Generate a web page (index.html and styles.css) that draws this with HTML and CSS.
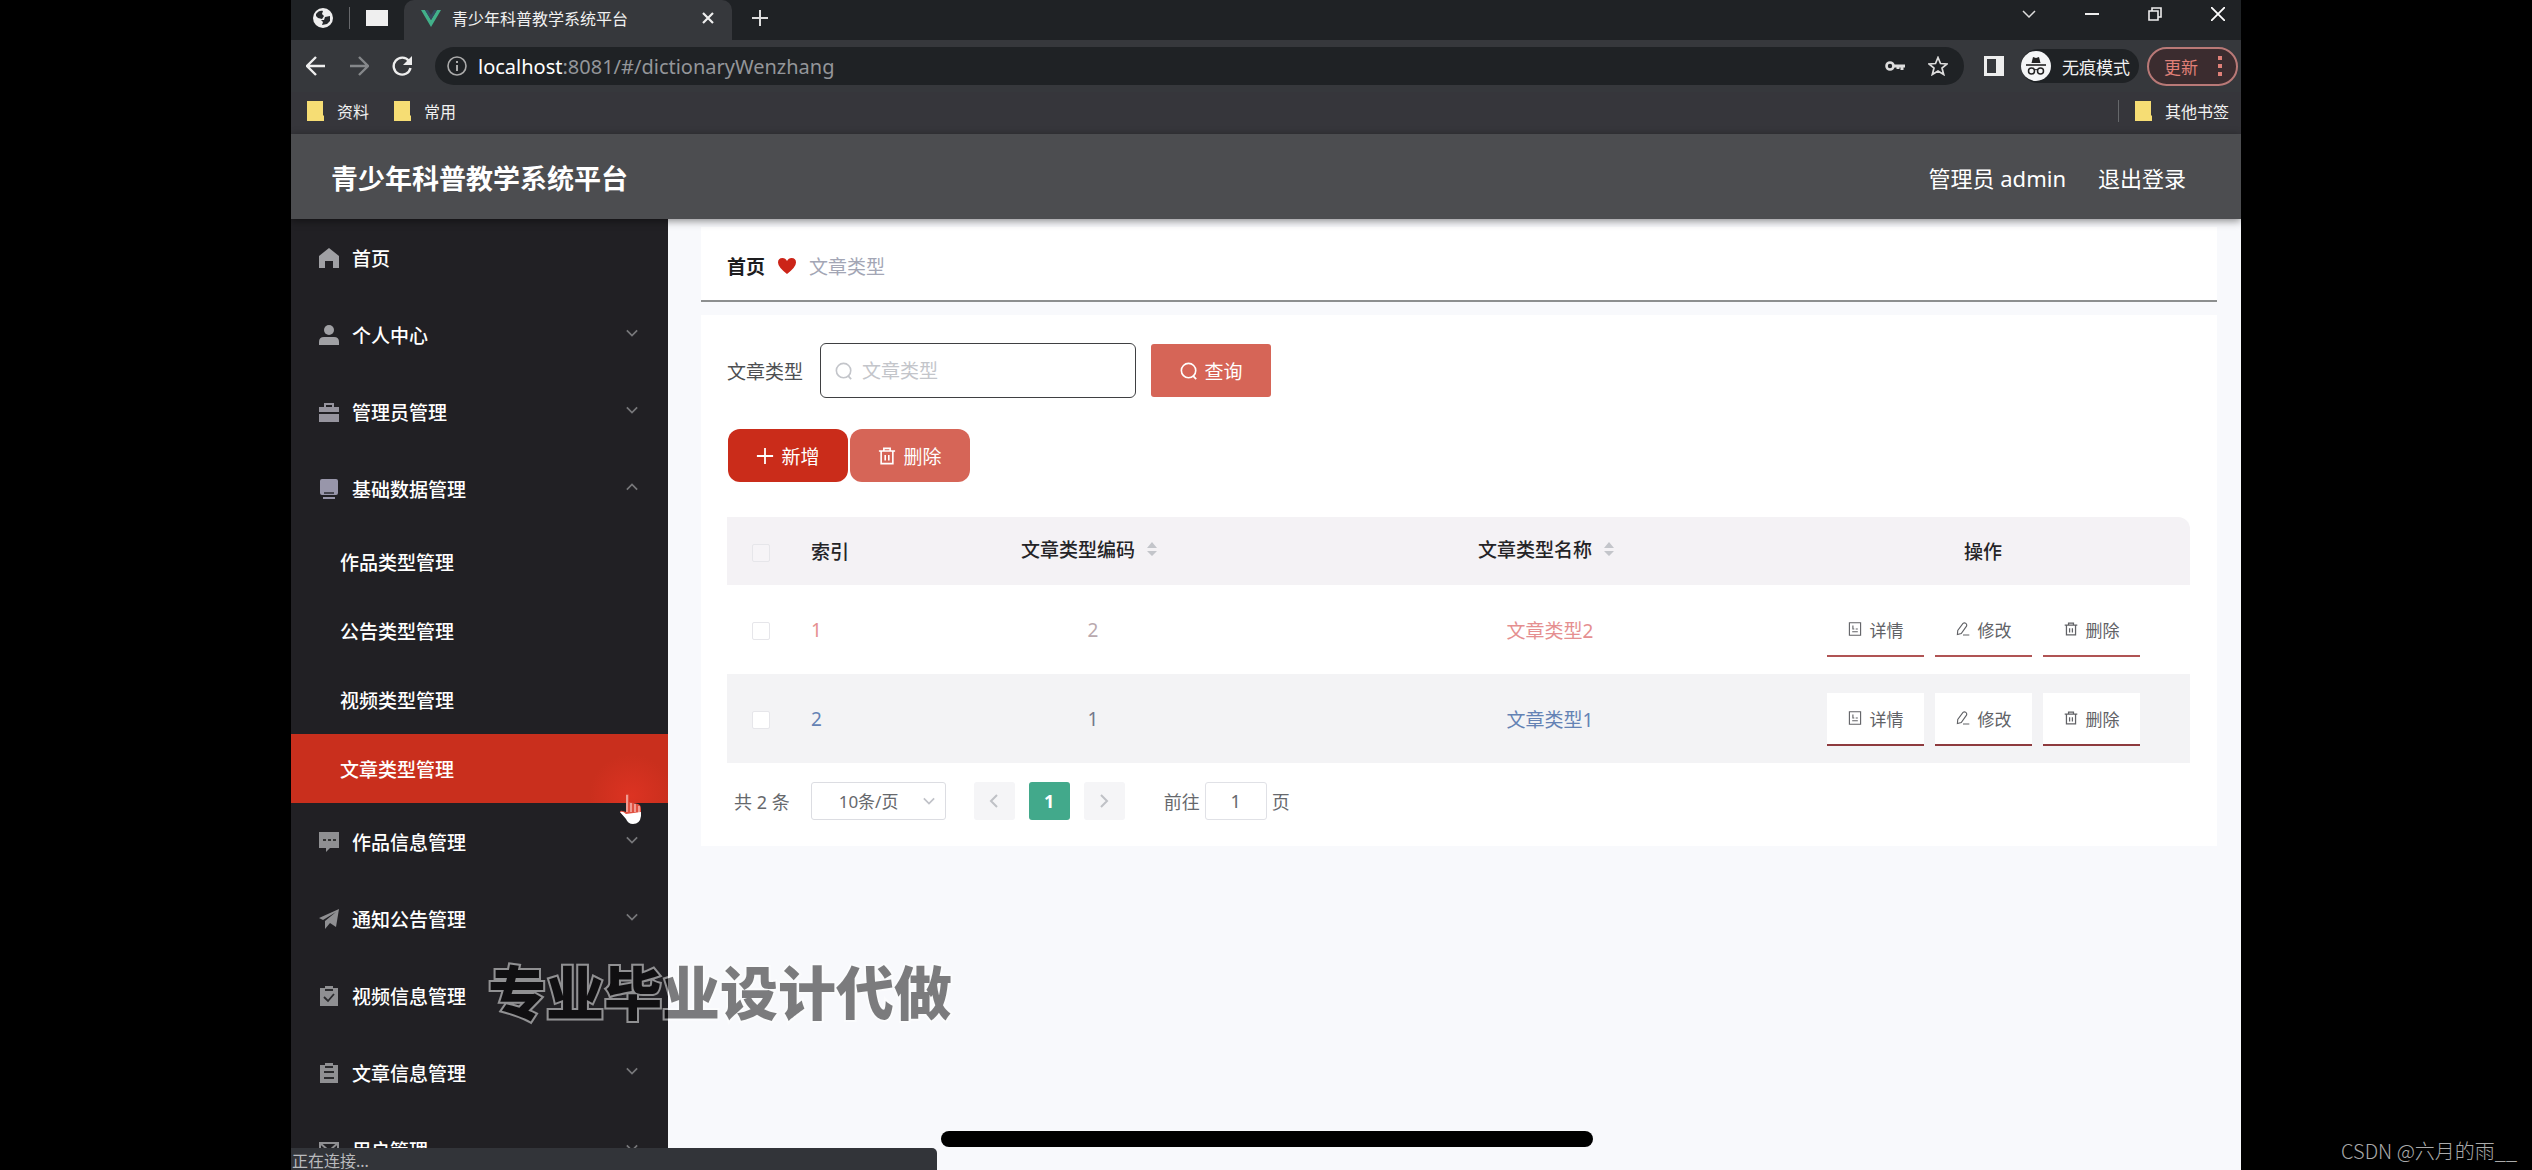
FILE: index.html
```html
<!DOCTYPE html>
<html lang="zh-CN">
<head>
<meta charset="utf-8">
<title>青少年科普教学系统平台</title>
<link rel="stylesheet" href="styles.css">
</head>
<body>
<svg class="sprite" aria-hidden="true">
  <symbol id="down" viewBox="0 0 14 14"><path d="M1 4l6 6 6-6" fill="none" stroke="currentColor" stroke-width="2"/></symbol>
  <symbol id="up" viewBox="0 0 14 14"><path d="M1 10l6-6 6 6" fill="none" stroke="currentColor" stroke-width="2"/></symbol>
  <symbol id="left" viewBox="0 0 14 14"><path d="M10 1L4 7l6 6" fill="none" stroke="currentColor" stroke-width="2"/></symbol>
  <symbol id="right" viewBox="0 0 14 14"><path d="M4 1l6 6-6 6" fill="none" stroke="currentColor" stroke-width="2"/></symbol>
  <symbol id="search" viewBox="0 0 20 20"><circle cx="9.500" cy="9.500" r="8" fill="none" stroke="currentColor" stroke-width="1.800"/><path d="M14.500 15.500l3.500 3.500" stroke="currentColor" stroke-width="2"/></symbol>
  <symbol id="trash" viewBox="0 0 20 20"><path d="M1 4.500h18M6.500 4V1.500h7V4M3.500 5v13.500h13V5M8 9v6M12 9v6" fill="none" stroke="currentColor" stroke-width="1.800"/></symbol>
  <symbol id="plus" viewBox="0 0 20 20"><path d="M10 1v18M1 10h18" stroke="currentColor" stroke-width="2"/></symbol>
  <symbol id="doc" viewBox="0 0 20 20"><path d="M2 1h16v18H2zM7 5v5h2M6 14h8M11 10h3" fill="none" stroke="currentColor" stroke-width="1.600"/></symbol>
  <symbol id="edit" viewBox="0 0 20 20"><path d="M10 2q2-1.500 4 0t1 4L7.500 16.500 2 18l.500-6zM10 18.500h9" fill="none" stroke="currentColor" stroke-width="1.600"/></symbol>
  <symbol id="folder" viewBox="0 0 17 20"><path d="M0 0h16v14l1 1v5H0z" fill="#f6dd74"/></symbol>
  <symbol id="sort" viewBox="0 0 12 18"><path d="M6 2l5 6H1zM6 16l5-5H1z" fill="#c3c5ca"/></symbol>
</svg>

<div class="stage">
  <div class="tabs">
    <div class="pinned">
      <svg class="ico20" viewBox="0 0 20 20"><circle cx="10" cy="10" r="10" fill="#eee"/><path d="M3 6c2-3 5-4 7-3l-1 3 2 2-2 3-4-1-2-2zM12 9l5-1v5l-3 3-5 1 1-3-2-2 3 0z" fill="#26292c"/></svg>
      <span class="bar-sep"></span>
      <span class="pinned-page"></span>
    </div>
    <div class="tab">
      <svg class="vue" viewBox="0 0 20 17"><path d="M0 0h4l6 10 6-10h4L10 17z" fill="#42b08a"/><path d="M4 0h3l3 5 3-5h3l-6 10z" fill="#35495e"/></svg>
      <span class="tab-title">青少年科普教学系统平台</span>
      <button class="plain" aria-label="关闭标签页"><svg class="ico12" viewBox="0 0 12 12"><path d="M1 1l10 10M11 1L1 11" stroke="#eee" stroke-width="2.200"/></svg></button>
    </div>
    <button class="plain new-tab" aria-label="新标签页"><svg class="ico16" viewBox="0 0 16 16"><path d="M8 0v16M0 8h16" stroke="#ddd" stroke-width="2"/></svg></button>
    <div class="window-buttons">
      <button class="plain" aria-label="标签页列表"><svg class="ico14" viewBox="0 0 14 14"><path d="M1 4l6 6 6-6" fill="none" stroke="#ddd" stroke-width="1.500"/></svg></button>
      <button class="plain" aria-label="最小化"><svg class="ico14" viewBox="0 0 14 14"><path d="M0 7h14" stroke="#eee" stroke-width="2"/></svg></button>
      <button class="plain" aria-label="还原"><svg class="ico14" viewBox="0 0 14 14"><path d="M1 4h9v9H1zM4 4V1h9v9h-3" fill="none" stroke="#eee" stroke-width="1.600"/></svg></button>
      <button class="plain" aria-label="关闭"><svg class="ico14" viewBox="0 0 14 14"><path d="M0 0l14 14M14 0L0 14" stroke="#fff" stroke-width="1.800"/></svg></button>
    </div>
  </div>

  <div class="toolbar">
    <button class="plain" aria-label="后退"><svg class="ico20" viewBox="0 0 20 20"><path d="M19 10H2M10 1l-9 9 9 9" fill="none" stroke="#eee" stroke-width="2.400"/></svg></button>
    <button class="plain" aria-label="前进"><svg class="ico20" viewBox="0 0 20 20"><path d="M1 10h17M10 1l9 9-9 9" fill="none" stroke="#85878a" stroke-width="2.400"/></svg></button>
    <button class="plain" aria-label="刷新"><svg class="ico20" viewBox="0 0 20 20"><path d="M17 5a8.500 8.500 0 1 0 1.500 7" fill="none" stroke="#eee" stroke-width="2.400"/><path d="M20 0v9h-9z" fill="#eee"/></svg></button>
    <div class="address">
      <svg class="ico20" viewBox="0 0 20 20"><circle cx="10" cy="10" r="9" fill="none" stroke="#aaa" stroke-width="1.600"/><path d="M10 9v6M10 5v2" stroke="#aaa" stroke-width="2"/></svg>
      <span class="url"><b>localhost</b>:8081/#/dictionaryWenzhang</span>
      <svg class="ico20" viewBox="0 0 20 20"><circle cx="5" cy="10" r="3.500" fill="none" stroke="#ddd" stroke-width="2.600"/><path d="M8 10h12M17 10v4M13 10v3" stroke="#ddd" stroke-width="3"/></svg>
      <svg class="ico20" viewBox="0 0 20 20"><path d="M10 1.500l2.500 6 6.500.5-5 4 1.700 6.500L10 15l-5.700 3.500L6 12 1 8l6.500-.5z" fill="none" stroke="#ddd" stroke-width="1.700"/></svg>
    </div>
    <svg class="ico20" viewBox="0 0 20 20"><path d="M1.500 1.500h17v17h-17z" fill="none" stroke="#eee" stroke-width="3"/><path d="M12 1h7v18h-7z" fill="#eee"/></svg>
    <div class="incognito">
      <svg class="ico30" viewBox="0 0 30 30"><circle cx="15" cy="15" r="15" fill="#f4f5f6"/><path d="M10.500 12l1.500-6 3 1 3-1 1.500 6z" fill="#222"/><path d="M5 14h20" stroke="#222" stroke-width="1.600"/><circle cx="10.500" cy="20" r="3" fill="none" stroke="#222" stroke-width="1.500"/><circle cx="19.500" cy="20" r="3" fill="none" stroke="#222" stroke-width="1.500"/><path d="M13 19q2-1 4 0" fill="none" stroke="#222"/></svg>
      <span>无痕模式</span>
    </div>
    <button class="update">更新<svg class="dots" viewBox="0 0 4 20"><path d="M0 0h4v4H0zM0 8h4v4H0zM0 16h4v4H0z" fill="#e08078"/></svg></button>
  </div>

  <div class="bookmarks">
    <a href="#"><svg class="folder"><use href="#folder"/></svg>资料</a>
    <a href="#"><svg class="folder"><use href="#folder"/></svg>常用</a>
    <span class="bar-sep push"></span>
    <a href="#"><svg class="folder"><use href="#folder"/></svg>其他书签</a>
  </div>

  <header class="app-header">
    <h1>青少年科普教学系统平台</h1>
    <span>管理员 admin</span>
    <a href="#">退出登录</a>
  </header>

  <div class="body">
    <nav class="side">
      <a class="item" href="#"><svg class="ico20" viewBox="0 0 20 20"><path d="M10 0l10 8v12h-6v-7H6v7H0V8z" fill="#a0a0a4"/></svg><span>首页</span></a>
      <a class="item" href="#"><svg class="ico20" viewBox="0 0 20 20"><circle cx="10" cy="5" r="5" fill="#a0a0a4"/><path d="M0 20v-3q0-5 5-5h10q5 0 5 5v3z" fill="#a0a0a4"/></svg><span>个人中心</span><svg class="chev"><use href="#down"/></svg></a>
      <a class="item" href="#"><svg class="ico20" viewBox="0 0 20 20"><path d="M0 10V5h5V1h10v4h5v5zM7 5h6V3H7zM0 12h20v8H0z" fill="#96949e" fill-rule="evenodd"/></svg><span>管理员管理</span><svg class="chev"><use href="#down"/></svg></a>
      <a class="item" href="#"><svg class="ico20" viewBox="0 0 20 20"><path d="M1 2q0-2 2-2h14q2 0 2 2v12q0 2-2 2H3q-2 0-2-2zM4 18h12v2H4z" fill="#9896aa"/><path d="M5 14h10" stroke="#2a2a30" stroke-width="1.500"/></svg><span>基础数据管理</span><svg class="chev"><use href="#up"/></svg></a>
      <a class="sub" href="#">作品类型管理</a>
      <a class="sub" href="#">公告类型管理</a>
      <a class="sub" href="#">视频类型管理</a>
      <a class="sub active" href="#">文章类型管理
        <svg class="hand" viewBox="0 0 22 32"><path d="M6 1q2-1 3 1v7l9 2q3 1 3 5v6H3l-3-3q0-2 3-1l3 1z" fill="#e0503f"/><path d="M7 2v17M11 10v9M15 11v8M19 13v7" stroke="#f3b0a8" stroke-width="1.600"/><path d="M0 19q3-1 6 2l15-2v4q-1 8-8 8-5 0-7-5z" fill="#fff"/></svg>
      </a>
      <a class="item" href="#"><svg class="ico20" viewBox="0 0 20 20"><path d="M0 0h20v16h-9l-4 4v-4H0z" fill="#8f8f92"/><path d="M4 8h3M9 8h3M14 8h3" stroke="#333" stroke-width="2"/></svg><span>作品信息管理</span><svg class="chev"><use href="#down"/></svg></a>
      <a class="item" href="#"><svg class="ico20" viewBox="0 0 20 20"><path d="M20 0l-3 18-6-4-5 6v-8L17 3 4 11l-4-2z" fill="#8f8f92"/></svg><span>通知公告管理</span><svg class="chev"><use href="#down"/></svg></a>
      <a class="item" href="#"><svg class="ico20" viewBox="0 0 20 20"><path d="M1 2h5V0h8v2h5v18H1z" fill="#8f8f92"/><path d="M6 4h8M5 11l4 4 6-7" fill="none" stroke="#2a2a2d" stroke-width="1.800"/></svg><span>视频信息管理</span></a>
      <a class="item" href="#"><svg class="ico20" viewBox="0 0 20 20"><path d="M1 2h5V0h8v2h5v18H1z" fill="#8f8f92"/><path d="M6 4h8M5 9h10M5 15h10" fill="none" stroke="#2a2a2d" stroke-width="1.800"/></svg><span>文章信息管理</span><svg class="chev"><use href="#down"/></svg></a>
      <a class="item" href="#"><svg class="ico20" viewBox="0 0 20 20"><path d="M1 3h18v14H1zM1 3l9 8 9-8" fill="none" stroke="#8f8f92" stroke-width="2"/></svg><span>用户管理</span><svg class="chev"><use href="#down"/></svg></a>
    </nav>

    <main class="main">
      <div class="crumb">
        <a href="#">首页</a>
        <svg class="heart" viewBox="0 0 18 16"><path d="M9 16Q0 9 0 4.500 0 0 4.500 0 7.500 0 9 3q1.500-3 4.500-3Q18 0 18 4.500 18 9 9 16z" fill="#cc2418"/></svg>
        <span>文章类型</span>
      </div>

      <section class="card">
        <form class="filter">
          <label for="type">文章类型</label>
          <div class="field">
            <svg class="ico18"><use href="#search"/></svg>
            <input id="type" type="text" placeholder="文章类型">
          </div>
          <button class="btn soft query" type="button"><svg class="ico18"><use href="#search"/></svg>查询</button>
        </form>
        <div class="actions">
          <button class="btn"><svg class="ico18"><use href="#plus"/></svg>新增</button>
          <button class="btn soft"><svg class="ico18"><use href="#trash"/></svg>删除</button>
        </div>

        <table>
          <colgroup><col class="c-check"><col class="c-index"><col><col><col class="c-ops"></colgroup>
          <thead>
            <tr>
              <th><input type="checkbox" aria-label="全选"></th>
              <th class="index">索引</th>
              <th class="sorted"><span class="sortable">文章类型编码<svg class="sort"><use href="#sort"/></svg></span></th>
              <th class="sorted"><span class="sortable">文章类型名称<svg class="sort"><use href="#sort"/></svg></span></th>
              <th>操作</th>
            </tr>
          </thead>
          <tbody>
            <tr class="pink">
              <td><input type="checkbox" aria-label="选择第1行"></td>
              <td class="index">1</td>
              <td class="value code">2</td>
              <td class="value">文章类型2</td>
              <td><div class="ops"><button><svg class="ico14"><use href="#doc"/></svg>详情</button><button><svg class="ico14"><use href="#edit"/></svg>修改</button><button><svg class="ico14"><use href="#trash"/></svg>删除</button></div></td>
            </tr>
            <tr class="blue">
              <td><input type="checkbox" aria-label="选择第2行"></td>
              <td class="index">2</td>
              <td class="value code">1</td>
              <td class="value">文章类型1</td>
              <td><div class="ops"><button><svg class="ico14"><use href="#doc"/></svg>详情</button><button><svg class="ico14"><use href="#edit"/></svg>修改</button><button><svg class="ico14"><use href="#trash"/></svg>删除</button></div></td>
            </tr>
          </tbody>
        </table>

        <div class="pager">
          <span>共 2 条</span>
          <div class="size"><select aria-label="每页条数"><option>10条/页</option></select><svg class="ico12"><use href="#down"/></svg></div>
          <button class="page" aria-label="上一页"><svg class="ico14"><use href="#left"/></svg></button>
          <button class="page current">1</button>
          <button class="page" aria-label="下一页"><svg class="ico14"><use href="#right"/></svg></button>
          <label class="jump">前往<input type="text" value="1">页</label>
        </div>
      </section>
    </main>
  </div>

  <div class="status">正在连接...</div>
  <div class="caption">专业毕业设计代做</div>
</div>
<div class="home-bar"></div>
<div class="credit">CSDN @六月的雨__</div>
</body>
</html>
```

FILE: styles.css
```css
* { box-sizing: border-box; }
body {
  margin: 0;
  background: #000;
  font-family: "Noto Sans", "Noto Sans CJK SC", sans-serif;
  overflow: hidden;
}
a { color: inherit; text-decoration: none; }
button, input, select { font: inherit; color: inherit; margin: 0; }
svg { flex: none; display: block; }
.sprite { position: absolute; width: 0; height: 0; }
.plain { background: none; border: 0; padding: 0; display: flex; }
.ico12 { width: 12px; height: 12px; }
.ico14 { width: 14px; height: 14px; }
.ico16 { width: 16px; height: 16px; }
.ico18 { width: 18px; height: 18px; }
.ico20 { width: 20px; height: 20px; }
.ico30 { width: 30px; height: 30px; }

.stage {
  position: relative;
  height: 100vh;
  margin: 0 291px;
  display: flex;
  flex-direction: column;
  overflow: hidden;
  background: #f8f9fc;
}

/* browser window */
.tabs { flex: none; height: 40px; display: flex; background: #1f2225; color: #f1f1f1; }
.pinned { width: 113px; display: flex; align-items: center; gap: 16px; padding-left: 22px; padding-bottom: 4px; }
.bar-sep { width: 1px; height: 22px; background: #66686b; }
.pinned-page { width: 22px; height: 16px; background: #efefef; }
.tab { width: 328px; display: flex; align-items: center; padding: 0 18px 4px 17px; background: #36383c; border-radius: 10px 10px 0 0; font-size: 16px; }
.vue { width: 20px; height: 17px; margin-right: 11px; }
.tab-title { flex: 1; }
.new-tab { align-items: center; margin-left: 20px; padding-bottom: 4px; }
.window-buttons { margin-left: auto; display: flex; align-items: center; gap: 49px; padding: 0 16px 12px 0; }
.toolbar { flex: none; height: 52px; display: flex; align-items: center; background: #36383c; padding: 0 3px 0 15px; gap: 23px; color: #f1f1f1; }
.address { flex: 1; height: 38px; display: flex; align-items: center; gap: 23px; margin-right: -3px; padding: 0 16px 0 12px; border-radius: 19px; background: #1f2225; }
.url { flex: 1; margin-left: -12px; font-size: 20px; color: #94969a; }
.url b { font-weight: 400; color: #fff; }
.incognito { display: flex; align-items: center; gap: 11px; height: 34px; margin-left: -6px; padding-right: 9px; border-radius: 17px; background: #1f2225; font-size: 17px; }
.update { width: 91px; height: 39px; margin-left: -15px; display: flex; align-items: center; justify-content: space-between; padding: 0 14px 0 15px; border: 2px solid #b97977; border-radius: 20px; background: #3b2c2f; color: #e08078; font-size: 17px; }
.dots { width: 4px; height: 20px; }
.bookmarks { flex: none; height: 42px; display: flex; align-items: center; gap: 25px; padding: 0 12px 4px 16px; background: #36363b; color: #f1f1f1; font-size: 16px; }
.bookmarks a { display: flex; align-items: center; gap: 13px; }
.folder { width: 17px; height: 20px; }
.push { margin-left: auto; margin-right: -9px; }

/* application */
.app-header { position: relative; z-index: 1; flex: none; height: 85px; display: flex; align-items: center; gap: 32px; padding: 0 55px 0 40px; background: #4c4d50; color: #fff; font-size: 22px; box-shadow: 0 2px 8px rgba(0, 0, 0, .45); }
.app-header h1 { flex: 1; margin: 0; padding-top: 2px; font-size: 27px; font-weight: 700; }
.body { flex: 1; min-height: 0; display: flex; }
.side { width: 377px; flex: none; background: #212024; color: #fff; font-size: 19px; font-weight: 500; }
.item { height: 77px; display: flex; align-items: center; padding: 0 30px 0 28px; }
.item span { flex: 1; margin-left: 13px; }
.chev { width: 12px; height: 12px; color: #77777a; margin-bottom: 4px; }
.sub { position: relative; height: 69px; display: flex; align-items: center; padding-left: 49px; }
.active { background: radial-gradient(circle at 340px 62px, #dc3322, #c92f1d 42px); }
.hand { position: absolute; right: 26px; bottom: -22px; width: 22px; height: 32px; z-index: 1; }

.main { flex: 1; padding: 8px 24px 0 33px; font-size: 19px; }
.crumb { height: 75px; display: flex; align-items: center; gap: 13px; padding: 4px 26px 0; background: #fff; border-bottom: 2px solid #8d8f8f; color: #a3a6b5; }
.crumb a { color: #1d1d1f; font-weight: 700; }
.heart { width: 18px; height: 16px; }
.card { margin-top: 13px; padding: 28px 27px 26px 26px; background: #fff; }
.filter { display: flex; align-items: center; color: #4d4f52; }
.field { width: 316px; height: 55px; margin: 0 15px 0 17px; display: flex; align-items: center; gap: 9px; padding-left: 14px; border: 1px solid #3f4042; border-radius: 6px; color: #c3c5ca; }
.field input { flex: 1; min-width: 0; border: 0; padding: 0; background: none; outline: 0; color: #4d4f52; }
.field input::placeholder { color: #c3c5ca; opacity: 1; }
.btn { width: 120px; height: 53px; display: flex; align-items: center; justify-content: center; gap: 7px; border: 0; border-radius: 12px; background: #ca2c1a; color: #fff; padding: 0; }
.soft { background: #d66557; }
.query { border-radius: 3px; }
.actions { display: flex; gap: 2px; margin: 31px 0 35px 1px; }

table { width: 100%; table-layout: fixed; border-collapse: collapse; }
.c-check { width: 68px; }
.c-index { width: 67px; }
.c-ops { width: 414px; }
th, td { padding: 0; text-align: center; }
th { height: 68px; background: #f4f2f5; color: #242427; font-weight: 500; }
th:last-child { border-radius: 0 12px 0 0; }
td { height: 89px; font-weight: 400; }
.index { padding-left: 16px; text-align: left; }
.sorted { padding: 0 2px 4px 0; }
.value { padding-left: 5px; }
.sortable { display: inline-flex; align-items: center; gap: 11px; }
.sort { width: 12px; height: 18px; }
input[type="checkbox"] { appearance: none; display: inline-block; width: 18px; height: 18px; border: 1px solid #e6e6ea; border-radius: 2px; background: #fff; vertical-align: middle; }
th input[type="checkbox"] { background: #f6f4f7; }
.pink { color: #e58f90; }
.pink .code { color: #b9a9ae; }
.blue { color: #6482b4; background: #f3f3f5; }
.blue .code { color: #73788a; }
.ops { display: flex; justify-content: center; gap: 11px; padding: 1px 0 0 1px; }
.ops button { width: 97px; height: 53px; display: flex; align-items: center; justify-content: center; gap: 8px; padding: 0; border: 0; border-bottom: 2px solid #b05454; background: #fff; color: #616266; font-size: 17px; }
.blue .ops button { border-bottom-color: #8e3a3e; }

.pager { display: flex; align-items: center; height: 38px; margin: 19px 0 0 7px; font-size: 18px; color: #66686c; }
.size { position: relative; width: 135px; margin: 0 28px 0 21px; }
.size select { width: 100%; height: 38px; appearance: none; padding: 0 0 0 27px; border: 1px solid #dcdde2; border-radius: 3px; background: #fff; font-size: 17px; }
.size svg { position: absolute; right: 11px; top: 13px; color: #c0c2c8; }
.page { width: 41px; height: 38px; margin-right: 14px; padding: 0; display: flex; align-items: center; justify-content: center; border: 0; border-radius: 3px; background: #f5f5f7; color: #bfc1c6; }
.current { background: #42a98b; color: #fff; font-weight: 700; }
.jump { display: flex; align-items: center; gap: 5px; margin-left: 25px; }
.jump input { width: 62px; height: 38px; border: 1px solid #e0e1e6; border-radius: 3px; text-align: center; background: #fff; }

/* layers above the page */
.status { position: absolute; left: 0; bottom: 0; width: 646px; height: 22px; padding-left: 1px; background: #323439; border-radius: 0 5px 0 0; color: #b9babd; font-size: 16px; line-height: 26px; overflow: hidden; z-index: 2; }
.caption { position: absolute; left: 197px; bottom: 135px; font-size: 58px; line-height: 84px; font-weight: 900; color: #000; -webkit-text-stroke: 4px #fff; paint-order: stroke fill; opacity: .5; z-index: 2; white-space: nowrap; }
.home-bar { position: absolute; left: 50%; bottom: 23px; width: 652px; height: 16px; margin-left: -325px; border-radius: 8px; background: #000; z-index: 3; }
.credit { position: absolute; right: 15px; bottom: 5px; font-family: "Noto Sans CJK SC", sans-serif; font-size: 20px; line-height: 28px; font-weight: 300; color: #aaa; }
```
